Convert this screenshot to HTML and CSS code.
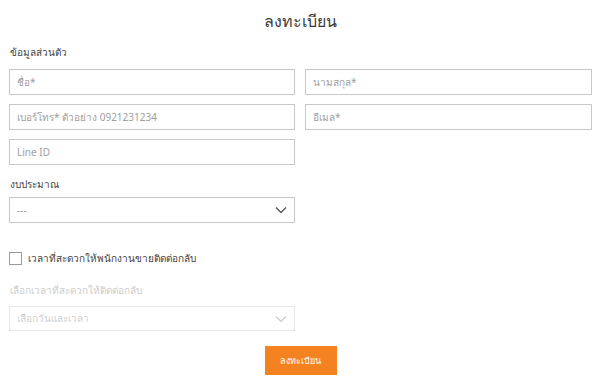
FILE: index.html
```html
<!DOCTYPE html>
<html lang="th">
<head>
<meta charset="utf-8">
<link rel="stylesheet" href="styles.css">
</head>
<body>
<div class="page">
  <h1 class="title">ลงทะเบียน</h1>
  <div class="section-label">ข้อมูลส่วนตัว</div>
  <div class="grid">
    <div class="field">ชื่อ*</div>
    <div class="field">นามสกุล*</div>
    <div class="field">เบอร์โทร* ตัวอย่าง 0921231234</div>
    <div class="field">อีเมล*</div>
    <div class="field">Line ID</div>
  </div>
  <div class="section-label budget">งบประมาณ</div>
  <div class="select">
    <span>---</span>
    <svg class="chev" width="12" height="8" viewBox="0 0 12 8"><path d="M1 1.5 L6 6.5 L11 1.5" fill="none" stroke="#555" stroke-width="1.3"/></svg>
  </div>
  <label class="check">
    <span class="box"></span>
    <span>เวลาที่สะดวกให้พนักงานขายติดต่อกลับ</span>
  </label>
  <div class="section-label muted">เลือกเวลาที่สะดวกให้ติดต่อกลับ</div>
  <div class="select disabled">
    <span>เลือกวันและเวลา</span>
    <svg class="chev" width="12" height="8" viewBox="0 0 12 8"><path d="M1 1.5 L6 6.5 L11 1.5" fill="none" stroke="#ccc" stroke-width="1.2"/></svg>
  </div>
  <div class="actions">
    <button class="submit">ลงทะเบียน</button>
  </div>
</div>
</body>
</html>
```
FILE: styles.css
```css
* { box-sizing: border-box; }
html, body { margin: 0; padding: 0; background: #fff; }
body {
  font-family: "Noto Sans", "DejaVu Sans", sans-serif;
  color: #333;
}
.page {
  width: 583px;
  margin-left: 9px;
  padding-top: 9px;
}
.title {
  margin: 0;
  text-align: center;
  font-size: 16px;
  font-weight: 400;
  line-height: 24px;
  color: #3a3a3a;
}
.section-label {
  font-size: 10px;
  line-height: 14px;
  margin-top: 12px;
  padding-left: 1px;
  color: #444;
}
.grid {
  display: grid;
  grid-template-columns: 286px 287px;
  column-gap: 10px;
  row-gap: 9px;
  margin-top: 10px;
}
.field, .select {
  height: 26px;
  border: 1px solid #c8c8c8;
  display: flex;
  align-items: center;
  padding-left: 7px;
  font-size: 10px;
  color: #a0a0a0;
}
.budget { margin-top: 12px; }
.select {
  width: 286px;
  margin-top: 6px;
  justify-content: space-between;
  padding-right: 7px;
}
.check {
  display: flex;
  align-items: center;
  gap: 6px;
  margin-top: 28px;
  font-size: 10px;
  color: #444;
}
.box {
  width: 13px;
  height: 13px;
  border: 1px solid #9a9a9a;
  background: #fff;
}
.muted {
  color: #cdcdcd;
  margin-top: 17px;
}
.disabled {
  border-color: #e6e6e6;
  color: #d0d0d0;
  height: 25px;
  margin-top: 9px;
}
.actions {
  display: flex;
  justify-content: center;
  margin-top: 15px;
}
.submit {
  width: 72px;
  height: 29px;
  border: 0;
  background: #f58220;
  color: #fff;
  font-family: inherit;
  font-size: 9px;
}
```
